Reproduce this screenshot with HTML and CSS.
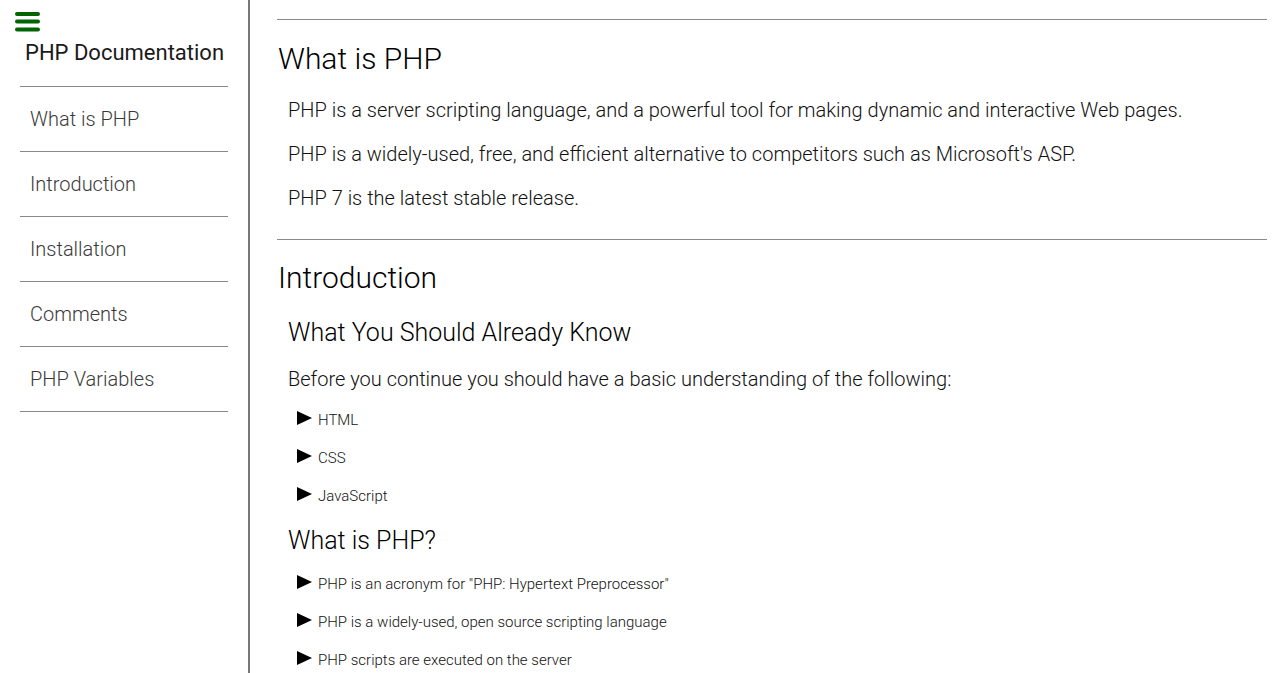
FILE: index.html
```html
<!DOCTYPE html>
<html lang="en">
<head>
<meta charset="utf-8">
<title>PHP Documentation</title>
<link rel="stylesheet" href="styles.css">
</head>
<body>
<div class="layout">
  <nav class="sidebar">
    <div class="sidebar-head">
      <button class="menu-btn" aria-label="Menu">
        <svg width="25" height="20" viewBox="0 0 25 20"><rect x="0" y="0" width="25" height="4" rx="2" fill="#006400"/><rect x="0" y="7.5" width="25" height="4" rx="2" fill="#006400"/><rect x="0" y="15.5" width="25" height="4" rx="2" fill="#006400"/></svg>
      </button>
      <div class="brand">PHP Documentation</div>
    </div>
    <ul class="nav-list">
      <li class="nav-item">What is PHP</li>
      <li class="nav-item">Introduction</li>
      <li class="nav-item">Installation</li>
      <li class="nav-item">Comments</li>
      <li class="nav-item">PHP Variables</li>
    </ul>
  </nav>
  <main class="content">
    <section class="doc-section">
      <hr class="rule">
      <h1 class="section-title">What is PHP</h1>
      <p class="text">PHP is a server scripting language, and a powerful tool for making dynamic and interactive Web pages.</p>
      <p class="text">PHP is a widely-used, free, and efficient alternative to competitors such as Microsoft's ASP.</p>
      <p class="text">PHP 7 is the latest stable release.</p>
    </section>
    <section class="doc-section">
      <hr class="rule">
      <h1 class="section-title">Introduction</h1>
      <h2 class="sub-title">What You Should Already Know</h2>
      <p class="text">Before you continue you should have a basic understanding of the following:</p>
      <ul class="bullets">
        <li>HTML</li>
        <li>CSS</li>
        <li>JavaScript</li>
      </ul>
      <h2 class="sub-title">What is PHP?</h2>
      <ul class="bullets">
        <li>PHP is an acronym for "PHP: Hypertext Preprocessor"</li>
        <li>PHP is a widely-used, open source scripting language</li>
        <li>PHP scripts are executed on the server</li>
      </ul>
    </section>
  </main>
</div>
</body>
</html>
```

FILE: styles.css
```css
html, body {
  margin: 0;
  padding: 0;
  height: 100%;
  overflow: hidden;
  background: #fff;
}
body {
  font-family: Roboto, "Liberation Sans", sans-serif;
  color: #111;
}
.layout {
  display: flex;
  height: 100%;
}
.sidebar {
  width: 248px;
  flex: 0 0 248px;
  border-right: 2px solid #777;
  box-sizing: content-box;
}
.sidebar-head {
  padding: 12px 0 21px 0;
}
.menu-btn {
  display: block;
  margin: 0 0 0 15px;
  padding: 0;
  border: 0;
  background: none;
  width: 25px;
  height: 20px;
  line-height: 0;
}
.brand {
  margin: 8px 0 0 25px;
  font-size: 22px;
  font-weight: 400;
  color: #1a1a1a;
}
.nav-list {
  list-style: none;
  margin: 0 20px;
  padding: 0;
  border-top: 1px solid #888;
}
.nav-item {
  padding: 20px 10px;
  font-size: 20px;
  line-height: 24px;
  font-weight: 300;
  color: #3a3a3a;
  border-bottom: 1px solid #888;
}
.content {
  flex: 1;
  padding: 19px 20px 0 27px;
  font-weight: 300;
}
.doc-section {
  padding-bottom: 9px;
}
.rule {
  margin: 0;
  border: 0;
  border-top: 1px solid #888;
}
.section-title {
  margin: 21px 0 21px 1px;
  font-size: 30px;
  font-weight: 300;
  line-height: 36px;
  color: #000;
}
.doc-section + .doc-section .section-title {
  margin-top: 20px;
  margin-bottom: 22px;
}
.sub-title {
  margin: 21px 0 19px 11px;
  font-size: 25px;
  font-weight: 300;
  line-height: 30px;
  color: #000;
}
.text {
  margin: 20px 0 20px 11px;
  font-size: 20px;
  line-height: 24px;
  color: #111;
}
.section-title + .sub-title + .text {
  margin-top: 19px;
}
.bullets {
  list-style: none;
  margin: 0 0 0 20px;
  padding: 0;
}
.sub-title + .bullets {
  margin-top: -1px;
}
.bullets li {
  display: flex;
  align-items: flex-start;
  margin: 20px 0;
  font-size: 15px;
  line-height: 18px;
  color: #111;
}
.bullets li::before {
  content: "";
  flex: 0 0 auto;
  width: 0;
  height: 0;
  border-top: 7px solid transparent;
  border-bottom: 7px solid transparent;
  border-left: 15px solid #000;
  margin-right: 6px;
}
```
